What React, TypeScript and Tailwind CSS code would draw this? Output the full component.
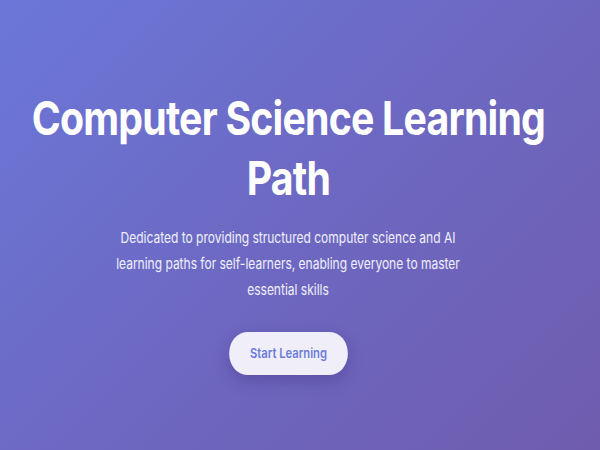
export default function App() {
  return (
    <div className="min-h-[450px] w-full overflow-hidden bg-[linear-gradient(135deg,#6b77d8_0%,#6d68c2_50%,#6f5cae_100%)] font-['Inter',sans-serif]">
      {/* Hero */}
      <section className="flex flex-col items-center pr-6 pt-[88px] text-center">
        <h1 className="scale-x-[0.835] whitespace-nowrap text-[47px] font-bold leading-[60px] tracking-[-0.02em] text-white">
          Computer Science Learning
          <br />
          Path
        </h1>
        <p className="mt-[17px] w-[440px] scale-x-[0.8] text-[15px] leading-[26px] text-white/90">
          Dedicated to providing structured computer science and AI learning paths for self-learners, enabling everyone to master essential skills
        </p>
        <button className="mt-[29px] h-[43px] w-[143px] scale-x-[0.83] rounded-full bg-[#f0eff9] text-[13.5px] font-semibold text-[#6a7bdc] shadow-[0_6px_18px_rgba(40,20,100,0.25)]">
          Start Learning
        </button>
      </section>
    </div>
  );
}
